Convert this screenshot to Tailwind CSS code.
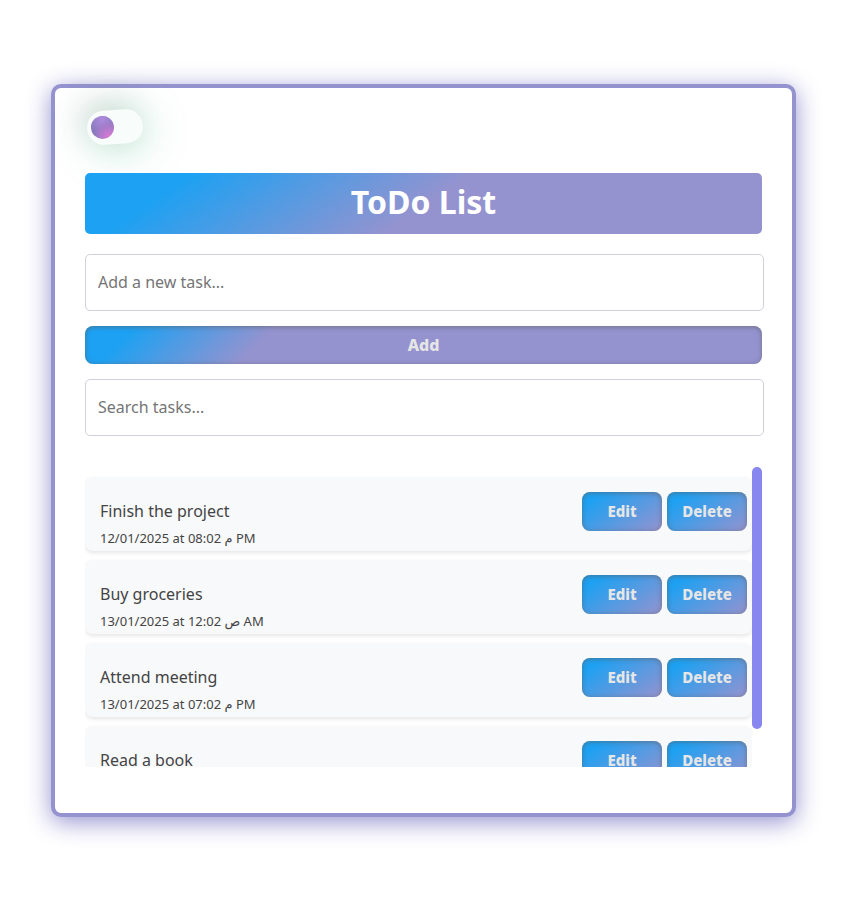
<!DOCTYPE html>
<html lang="en">
<head>
<meta charset="utf-8">
<meta name="viewport" content="width=device-width, initial-scale=1">
<title>ToDo List</title>
<script src="https://cdn.jsdelivr.net/npm/@tailwindcss/browser@4"></script>
</head>
<body class="bg-white font-['Noto_Sans','DejaVu_Sans',sans-serif] text-base text-[#444]">
<main class="mt-[84px] mr-[47px] mb-[84px] ml-[51px] rounded-[10px] border-4 border-[#9593cf] bg-white px-[30px] pt-5 pb-[46px] shadow-[0_5px_25px_#9593cf]">
  <div class="flex h-[65px] items-start">
    <label class="relative mt-[2px] ml-[2px] block h-[34px] w-[56px] -rotate-4 rounded-full bg-[#f8fcfb] shadow-[-8px_-10px_30px_rgba(60,70,65,0.14),4px_5px_40px_rgba(60,180,130,0.35)]">
      <input type="checkbox" aria-label="Dark mode" class="peer sr-only">
      <span class="absolute top-[5px] left-[4px] size-[23px] rounded-full bg-[radial-gradient(circle_at_75%_90%,#d878d4_0%,#b07acb_30%,transparent_55%),radial-gradient(circle_at_50%_15%,#ae8ade_0%,#8b7bbd_60%)]"></span>
    </label>
  </div>
  <h1 class="relative h-[61px] rounded-[5px] bg-[linear-gradient(145deg,#1da1f2_14%,#9593cf_51%)] text-center text-[32px] leading-[58px] font-bold text-white">ToDo List</h1>
  <form class="mt-5 flex flex-col gap-[15px]">
    <input type="text" aria-label="New task" placeholder="Add a new task..." class="-mr-[2px] h-[57px] rounded-[5px] border border-[#ced0dc] px-3 pb-[2px] placeholder:text-[#757575]">
    <button type="button" class="h-[38px] rounded-lg bg-[linear-gradient(135deg,#1da1f2_7%,#9593cf_27%)] font-extrabold text-[#e6e6e6] shadow-[inset_0_1px_5px_rgba(90,90,90,0.6)]">Add</button>
    <input type="text" aria-label="Search tasks" placeholder="Search tasks..." class="-mr-[2px] h-[57px] rounded-[5px] border border-[#ced0dc] px-3 pb-[2px] placeholder:text-[#757575]">
  </form>
  <div class="mt-[31px] flex h-[300px] overflow-hidden">
    <ul class="flex flex-1 flex-col gap-[9px] pt-[10px]">
      <li class="flex shrink-0 justify-between rounded-lg bg-[#f8f9fb] pr-[5px] pl-[15px] shadow-[0_2px_4px_rgba(0,0,0,0.1)]">
        <div class="pt-[22px] pb-[3px]"><p class="leading-6">Finish the project</p><p class="mt-[5px] text-[13px] leading-5">12/01/2025 at 08:02 م PM</p></div>
        <div class="flex gap-[5px] pt-[15px]">
          <button type="button" class="h-[39px] w-20 rounded-lg bg-[linear-gradient(145deg,#1da1f2_15%,#9593cf_100%)] text-[15px] font-extrabold text-[#e6e6e6] shadow-[inset_0_1px_5px_rgba(90,90,90,0.6)]">Edit</button>
          <button type="button" class="h-[39px] w-20 rounded-lg bg-[linear-gradient(145deg,#1da1f2_15%,#9593cf_100%)] text-[15px] font-extrabold text-[#e6e6e6] shadow-[inset_0_1px_5px_rgba(90,90,90,0.6)]">Delete</button>
        </div>
      </li>
      <li class="flex shrink-0 justify-between rounded-lg bg-[#f8f9fb] pr-[5px] pl-[15px] shadow-[0_2px_4px_rgba(0,0,0,0.1)]">
        <div class="pt-[22px] pb-[3px]"><p class="leading-6">Buy groceries</p><p class="mt-[5px] text-[13px] leading-5">13/01/2025 at 12:02 ص AM</p></div>
        <div class="flex gap-[5px] pt-[15px]">
          <button type="button" class="h-[39px] w-20 rounded-lg bg-[linear-gradient(145deg,#1da1f2_15%,#9593cf_100%)] text-[15px] font-extrabold text-[#e6e6e6] shadow-[inset_0_1px_5px_rgba(90,90,90,0.6)]">Edit</button>
          <button type="button" class="h-[39px] w-20 rounded-lg bg-[linear-gradient(145deg,#1da1f2_15%,#9593cf_100%)] text-[15px] font-extrabold text-[#e6e6e6] shadow-[inset_0_1px_5px_rgba(90,90,90,0.6)]">Delete</button>
        </div>
      </li>
      <li class="flex shrink-0 justify-between rounded-lg bg-[#f8f9fb] pr-[5px] pl-[15px] shadow-[0_2px_4px_rgba(0,0,0,0.1)]">
        <div class="pt-[22px] pb-[3px]"><p class="leading-6">Attend meeting</p><p class="mt-[5px] text-[13px] leading-5">13/01/2025 at 07:02 م PM</p></div>
        <div class="flex gap-[5px] pt-[15px]">
          <button type="button" class="h-[39px] w-20 rounded-lg bg-[linear-gradient(145deg,#1da1f2_15%,#9593cf_100%)] text-[15px] font-extrabold text-[#e6e6e6] shadow-[inset_0_1px_5px_rgba(90,90,90,0.6)]">Edit</button>
          <button type="button" class="h-[39px] w-20 rounded-lg bg-[linear-gradient(145deg,#1da1f2_15%,#9593cf_100%)] text-[15px] font-extrabold text-[#e6e6e6] shadow-[inset_0_1px_5px_rgba(90,90,90,0.6)]">Delete</button>
        </div>
      </li>
      <li class="flex shrink-0 justify-between rounded-lg bg-[#f8f9fb] pr-[5px] pl-[15px] shadow-[0_2px_4px_rgba(0,0,0,0.1)]">
        <div class="pt-[22px] pb-7"><p class="leading-6">Read a book</p></div>
        <div class="flex gap-[5px] pt-[15px]">
          <button type="button" class="h-[39px] w-20 rounded-lg bg-[linear-gradient(145deg,#1da1f2_15%,#9593cf_100%)] text-[15px] font-extrabold text-[#e6e6e6] shadow-[inset_0_1px_5px_rgba(90,90,90,0.6)]">Edit</button>
          <button type="button" class="h-[39px] w-20 rounded-lg bg-[linear-gradient(145deg,#1da1f2_15%,#9593cf_100%)] text-[15px] font-extrabold text-[#e6e6e6] shadow-[inset_0_1px_5px_rgba(90,90,90,0.6)]">Delete</button>
        </div>
      </li>
    </ul>
    <div class="w-[10px] bg-white"><div class="h-[262px] rounded-full bg-[#8787ef]"></div></div>
  </div>
</main>
</body>
</html>
